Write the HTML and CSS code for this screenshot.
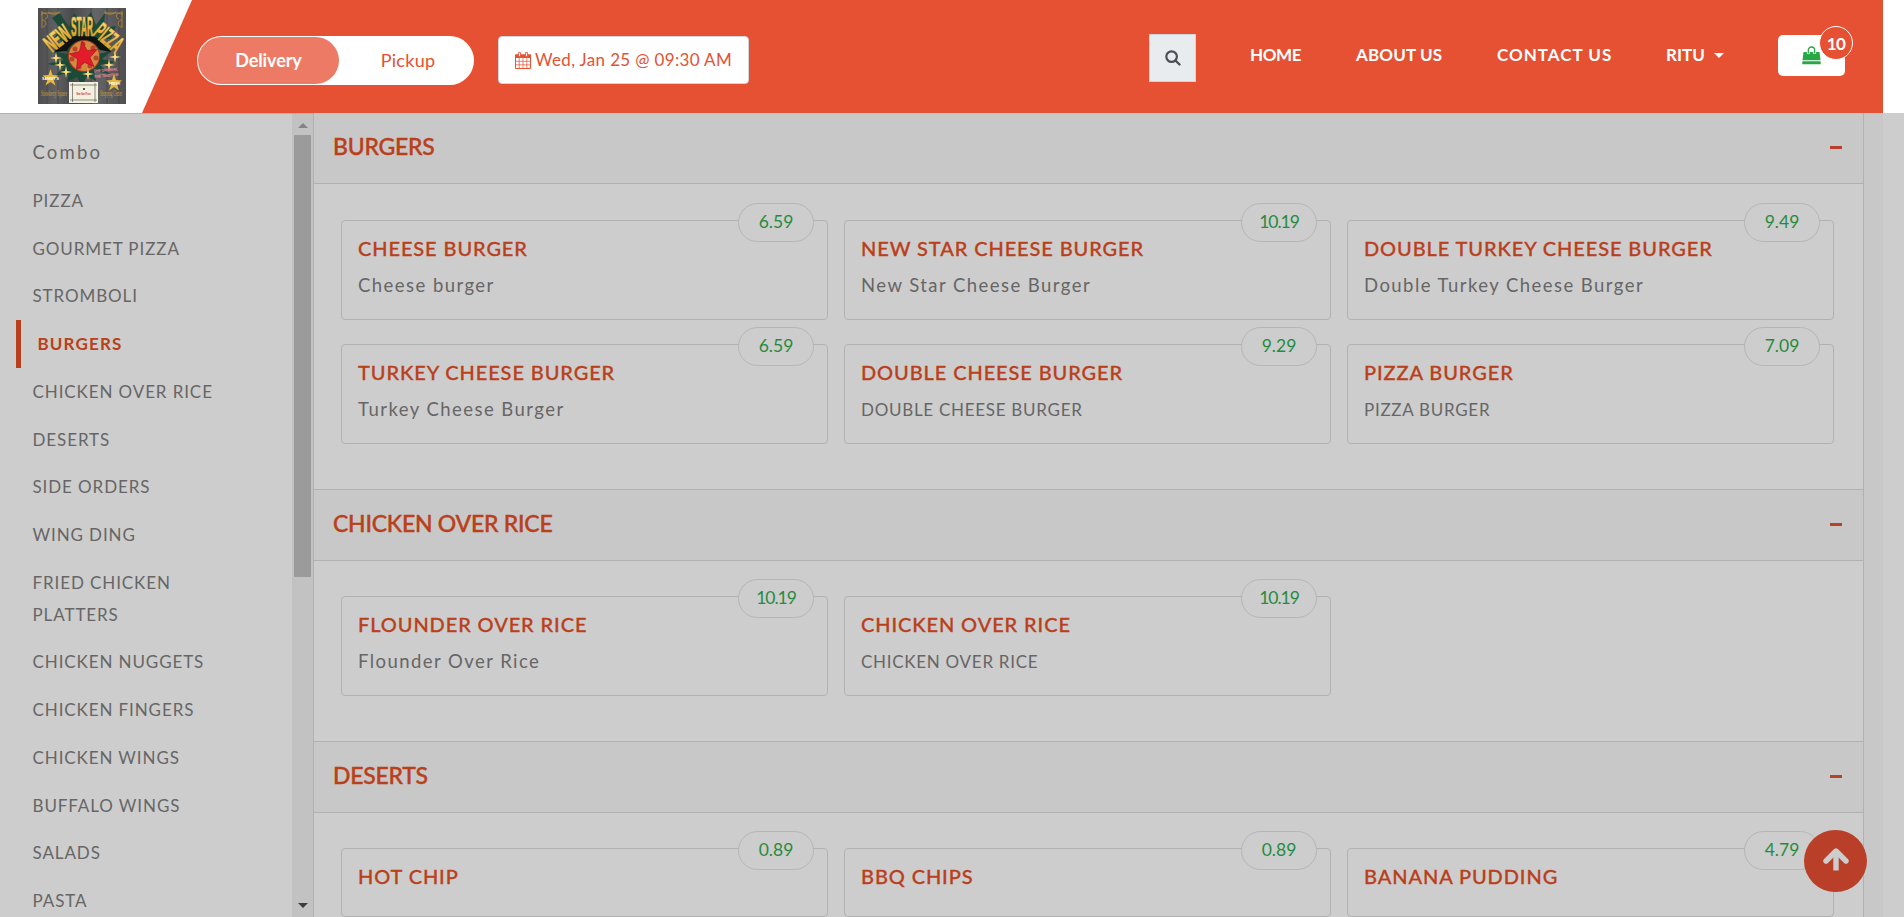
FILE: index.html
```html
<!DOCTYPE html>
<html lang="en">
<head>
<meta charset="utf-8">
<title>New Star Pizza</title>
<link rel="stylesheet" href="styles.css">
</head>
<body>
<header class="top">
  <div class="brand">
    <svg class="logo" viewBox="0 0 88 96" width="88" height="96">
      <defs>
        <linearGradient id="gold" x1="0" y1="0" x2="0" y2="1"><stop offset="0" stop-color="#ffe98a"/><stop offset=".5" stop-color="#eeb93a"/><stop offset="1" stop-color="#d08f1c"/></linearGradient>
        <linearGradient id="wood" x1="0" y1="0" x2="1" y2="0"><stop offset="0" stop-color="#4d4d4f"/><stop offset=".2" stop-color="#606062"/><stop offset=".4" stop-color="#4a4a4c"/><stop offset=".65" stop-color="#656567"/><stop offset="1" stop-color="#505052"/></linearGradient>
      </defs>
      <rect width="88" height="96" fill="url(#wood)"/>
      <path d="M9 0v96M20 0v96M34 0v96M53 0v96M69 0v96M81 0v96" stroke="#444446" stroke-width=".8"/>
      <path d="M22 5l9 14 5-14 8 10 9-11 5 13 9-12-1 15 12-2-5 13-58 0 8-10-9-11z" fill="#1c4a38"/>
      <path d="M14 43l16 3-10-18 48 0-9 18 15-3-10 8 14 3-16 3 10 9-16-3 2 10-9-5-5 10-5-9-10 5 2-10-15 5 10-10-17-3 17-4z" fill="#1c4a38"/>
      <path d="M17 44C22 22 68 22 73 44L62 42C54 29 36 29 29 43z" fill="#0c1512"/>
      <circle cx="46" cy="48" r="16" fill="#b03a1e"/><circle cx="46" cy="48" r="15" fill="#d58a42"/>
      <g fill="#b8452c"><circle cx="37" cy="41" r="2.500"/><circle cx="45" cy="36" r="2.500"/><circle cx="55" cy="40" r="2.500"/><circle cx="58" cy="50" r="2.500"/><circle cx="52" cy="58" r="2.500"/><circle cx="41" cy="59" r="2.500"/><circle cx="34" cy="51" r="2.500"/></g>
      <path d="M44 33l5 9.500 10-1-7 8 4 9-9.500-4-8 7 1-10.500-8-5 10-2.500z" fill="#e31b2b" stroke="#8e121c" stroke-width=".6"/>
      <g class="flourish"><path d="M3 5h19M4 3v17M3 7c6-5 9 3 4 4M10 4c5 4 11 2 11-1M4 12c5 0 5 6 1 7"/><path d="M85 5H66M84 3v17M85 7c-6-5-9 3-4 4M78 4c-5 4-11 2-11-1M84 12c-5 0-5 6-1 7"/></g>
      <text class="logo-title" fill="url(#gold)" transform="translate(14 45) rotate(-38) scale(.5 1.050)">NEW</text>
      <text class="logo-title" fill="url(#gold)" transform="translate(33 27.500) scale(.36 1.200)">STAR</text>
      <text class="logo-title" fill="url(#gold)" transform="translate(54 26.500) rotate(40) scale(.45 1.050)">PIZZA</text>
      <g fill="#ffe27a"><path id="spark" d="M18 44l1 5 5 1-5 1-1 5-1-5-5-1 5-1z"/><use href="#spark" x="4" y="7"/><use href="#spark" x="10" y="14"/><use href="#spark" x="59" y="-1"/><use href="#spark" x="53" y="7"/><use href="#spark" x="32" y="16"/></g>
      <path id="star" d="M12.500 61l2 6 6 .500-5 4 2 6-5-3.500-5 3.500 2-6-5-4 6-.500z" fill="#e6b93c"/>
      <use href="#star" x="63.500" y="5"/>
      <text class="logo-white" x="4" y="72" textLength="17" lengthAdjust="spacingAndGlyphs">SAMMY'S</text><text class="logo-white" x="71" y="77" textLength="11" lengthAdjust="spacingAndGlyphs">FRESH</text>
      <text class="logo-red" transform="translate(56 64.500) rotate(-5)" textLength="24" lengthAdjust="spacingAndGlyphs">THE ORIGINAL</text><text class="logo-red" transform="translate(56.500 70) rotate(-5)" textLength="24" lengthAdjust="spacingAndGlyphs">FINE TRADITION</text>
      <text class="logo-gold" x="3" y="88" textLength="26" lengthAdjust="spacingAndGlyphs">Strawberry Square</text>
      <text class="logo-gold" x="62" y="88" textLength="22" lengthAdjust="spacingAndGlyphs">Shopping Center</text>
      <rect x="31" y="74" width="29" height="21" fill="#f4f0df"/>
      <path d="M32 77h27M32 92h27M34.500 75v19M57 75v19" stroke="#444" stroke-width=".6" fill="none"/>
      <circle cx="46" cy="81" r="1" fill="#222"/>
      <text class="logo-ticket" x="38.500" y="87" textLength="14" lengthAdjust="spacingAndGlyphs">New Star Pizza</text>
    </svg>
  </div>
  <div class="bar">
    <div class="switch"><span class="switch-on">Delivery</span><span class="switch-off">Pickup</span></div>
    <div class="when">
      <svg width="16" height="17" viewBox="0 0 16 17"><path d="M.5 3h15v13.500H.5z" fill="#fff" stroke="#e55132"/><path d="M0 2.500h16V6H0z" fill="#e55132"/><path d="M4.200 6v10M8 6v10M11.800 6v10M1 9.300h14M1 12.800h14" stroke="#e55132" stroke-width=".7"/><path d="M3.500.5h2v4h-2zM10.500.5h2v4h-2z" fill="#fff" stroke="#e55132" stroke-width=".8"/></svg>
      <span>Wed, Jan 25 @ 09:30 AM</span>
    </div>
    <div class="search"><svg width="16" height="16" viewBox="0 0 16 16" fill="none" stroke="#495057"><circle cx="6.600" cy="6.600" r="5.300" stroke-width="2.200"/><path d="M10.500 10.500l4 4" stroke-width="2.400" stroke-linecap="round"/></svg></div>
    <nav class="nav"><a class="n-home">HOME</a><a class="n-about">ABOUT US</a><a class="n-contact">CONTACT US</a><a class="n-user">RITU<i class="caret"></i></a></nav>
    <div class="cart">
      <svg width="19" height="19" viewBox="0 0 19 19"><path d="M1.500 6h16l1 8.200H.5z" fill="#28a745"/><path d="M.4 15.200h18.200l.2 3H.2z" fill="#28a745"/><path d="M6.300 8V4.200a3.200 3.200 0 0 1 6.400 0V8" fill="none" stroke="#fff" stroke-width="2.800"/><path d="M6.300 7.500V4.200a3.200 3.200 0 0 1 6.400 0v3.300" fill="none" stroke="#28a745" stroke-width="1.300"/></svg>
      <span class="count">10</span>
    </div>
  </div>
</header>
<div class="page">
  <aside class="side">
    <ul class="cats">
      <li class="mixed">Combo</li><li>PIZZA</li><li>GOURMET PIZZA</li><li>STROMBOLI</li><li class="active">BURGERS</li><li>CHICKEN OVER RICE</li><li>DESERTS</li><li>SIDE ORDERS</li><li>WING DING</li><li>FRIED CHICKEN<br>PLATTERS</li><li>CHICKEN NUGGETS</li><li>CHICKEN FINGERS</li><li>CHICKEN WINGS</li><li>BUFFALO WINGS</li><li>SALADS</li><li>PASTA</li>
    </ul>
    <div class="scroll"><i class="up"></i><i class="thumb"></i><i class="down"></i></div>
  </aside>
  <main class="menu">
    <section>
      <h2>BURGERS<i class="minus"></i></h2>
      <div class="grid">
        <article><h3>CHEESE BURGER</h3><p class="mixed">Cheese burger</p><span class="price">6.59</span></article>
        <article><h3>NEW STAR CHEESE BURGER</h3><p class="mixed">New Star Cheese Burger</p><span class="price long">10.19</span></article>
        <article><h3>DOUBLE TURKEY CHEESE BURGER</h3><p class="mixed">Double Turkey Cheese Burger</p><span class="price">9.49</span></article>
        <article><h3>TURKEY CHEESE BURGER</h3><p class="mixed">Turkey Cheese Burger</p><span class="price">6.59</span></article>
        <article><h3>DOUBLE CHEESE BURGER</h3><p>DOUBLE CHEESE BURGER</p><span class="price">9.29</span></article>
        <article><h3>PIZZA BURGER</h3><p>PIZZA BURGER</p><span class="price">7.09</span></article>
      </div>
    </section>
    <section>
      <h2>CHICKEN OVER RICE<i class="minus"></i></h2>
      <div class="grid">
        <article><h3>FLOUNDER OVER RICE</h3><p class="mixed">Flounder Over Rice</p><span class="price long">10.19</span></article>
        <article><h3>CHICKEN OVER RICE</h3><p>CHICKEN OVER RICE</p><span class="price long">10.19</span></article>
      </div>
    </section>
    <section>
      <h2>DESERTS<i class="minus"></i></h2>
      <div class="grid short">
        <article><h3>HOT CHIP</h3><span class="price">0.89</span></article>
        <article><h3>BBQ CHIPS</h3><span class="price">0.89</span></article>
        <article><h3>BANANA PUDDING</h3><span class="price">4.79</span></article>
      </div>
    </section>
  </main>
  <div class="gutter"></div>
</div>
<a class="to-top"><svg width="26" height="24" viewBox="0 0 26 24" fill="none" stroke="#cdcdcd" stroke-width="5.400"><path d="M13 23.500V5"/><path d="M3 14L13 4l10 10" stroke-linecap="round" stroke-linejoin="round"/></svg></a>
</body>
</html>
```
FILE: styles.css
```css
* { box-sizing: border-box; }
body { margin: 0; height: 917px; overflow: hidden; background: #fff; font-family: Lato, "Open Sans", sans-serif; }
.top { display: flex; height: 113px; width: 1883px; background: #e55132; }
.brand { width: 192px; padding: 8px 0 0 38px; background: #fff; clip-path: polygon(0 0, 100% 0, 142px 100%, 0 100%); }
.logo { display: block; }
.logo-title { font: 700 23px "Liberation Sans", sans-serif; stroke: #eeb93a; stroke-width: .6px; }
.logo-white { font: 700 4.400px "Liberation Sans", sans-serif; fill: #fff; }
.logo-red { font: 700 4px "Liberation Sans", sans-serif; fill: #ff8d98; }
.logo-gold { font: 9px "Liberation Serif", serif; fill: #c9a03a; }
.logo-ticket { font: 700 3px "Liberation Sans", sans-serif; fill: #d8182c; }
.flourish { fill: none; stroke: #b98d35; stroke-width: .8; }

.bar { display: flex; flex: 1; align-items: flex-start; padding-left: 5px; }
.switch { display: flex; width: 277px; height: 49px; margin-top: 36px; padding: 1px; border-radius: 25px; background: #fff; font-size: 18px; line-height: 46px; text-align: center; }
.switch-on { width: 141px; border-radius: 24px; background: #ec7a65; color: #fff; font-weight: 700; letter-spacing: -.1px; }
.switch-off { flex: 1; padding-left: 4px; color: #e55132; letter-spacing: .3px; }
.when { display: flex; align-items: center; gap: 4px; width: 251px; height: 48px; margin: 36px 0 0 24px; padding: 0 0 2px 16px; border: 1px solid #ced4da; border-radius: 4px; background: #fff; color: #e55132; font-size: 17px; white-space: nowrap; letter-spacing: .35px; }
.when svg { margin-top: 3px; }
.search { display: flex; align-items: center; justify-content: center; width: 47px; height: 48px; margin: 34px 0 0 400px; border: 1px solid #ced4da; background: #e9ecef; }
.nav { display: flex; margin: 43px 0 0 54px; color: #fff; font-size: 17px; font-weight: 700; line-height: 24px; white-space: nowrap; }
.n-home { width: 106px; letter-spacing: -.4px; }
.n-about { width: 141px; letter-spacing: .15px; }
.n-contact { width: 169px; letter-spacing: 1px; }
.n-user { display: flex; align-items: center; gap: 9px; width: 112px; }
.caret { border: 5px solid transparent; border-top-color: #fff; border-bottom: 0; }
.cart { position: relative; width: 67px; height: 41px; margin-top: 35px; padding: 11px 0 0 24px; border-radius: 5px; background: #fff; }
.cart svg { display: block; }
.count { position: absolute; left: 41px; top: -9px; width: 34px; height: 34px; border: 1px solid #fff; border-radius: 50%; background: #e55132; color: #fff; font-size: 17px; font-weight: 700; line-height: 33px; letter-spacing: -.5px; text-align: center; }

.page { display: flex; height: 804px; overflow: hidden; background: #cdcdcd; }
.side { display: flex; width: 314px; border-top: 1px solid #b1b1b1; border-right: 1px solid #b1b1b1; }
.cats { flex: 1; margin: 0; padding: 15px 0 0 16px; list-style: none; color: #666; font-size: 17px; line-height: 31.750px; letter-spacing: .9px; }
.cats li { padding: 8px 0 8px 16.500px; }
.cats .active { border-left: 5px solid #ba3f1b; color: #ba3f1b; font-weight: 700; letter-spacing: 1.150px; }
.cats .mixed { font-size: 18.500px; letter-spacing: 2.200px; }
.scroll { display: flex; flex-direction: column; align-items: center; width: 21px; background: #c2c2c2; }
.up { margin-top: 9px; border: 5px solid transparent; border-bottom-color: #848484; border-top: 0; }
.thumb { width: 17px; height: 442px; margin-top: 7px; background: #9b9b9b; }
.down { margin-top: 326px; border: 5px solid transparent; border-top-color: #3c3c3c; border-bottom: 0; }

.menu { width: 1550px; border-right: 1px solid #b1b1b1; }
.gutter { width: 19px; background: #c8c8c8; }
section + section { border-top: 1px solid #b1b1b1; }
h2 { display: flex; align-items: center; justify-content: space-between; height: 71px; margin: 0; padding: 0 21px 4px 19px; border-bottom: 1px solid #b1b1b1; background: #c8c8c8; color: #ba3f1b; font-size: 23px; font-weight: 500; letter-spacing: -.250px; -webkit-text-stroke: .4px #ba3f1b; }
.minus { width: 12px; height: 3px; margin-top: 2px; background: #b9412a; }
.grid { display: grid; grid-template-columns: repeat(3, 487px); gap: 24px 16px; padding: 36px 0 45px 27px; }
section + section .grid { padding-top: 35px; }
article { position: relative; height: 100px; padding: 13px 16px; border: 1px solid #b1b1b1; border-radius: 4px; }
.short article { height: 69px; }
h3 { margin: 0; color: #ba3f1b; font-size: 20px; line-height: 28px; font-weight: 500; letter-spacing: .900px; -webkit-text-stroke: .3px #ba3f1b; }
p { margin: 10px 0 0; color: #666; font-size: 17px; line-height: 27px; letter-spacing: .720px; }
p.mixed { font-size: 18.500px; letter-spacing: 1.450px; }
.price { position: absolute; right: 13px; top: -18px; width: 76px; height: 39px; border: 1px solid #b4b6b8; border-radius: 20px; background: #cdcdcd; color: #278b3f; font-size: 17.500px; line-height: 35px; text-align: center; }
.long { letter-spacing: -1px; }
.to-top { position: absolute; left: 1804px; top: 830px; display: flex; align-items: center; justify-content: center; width: 63px; height: 62px; padding-bottom: 4px; border-radius: 50%; background: #b93f28; }
```
